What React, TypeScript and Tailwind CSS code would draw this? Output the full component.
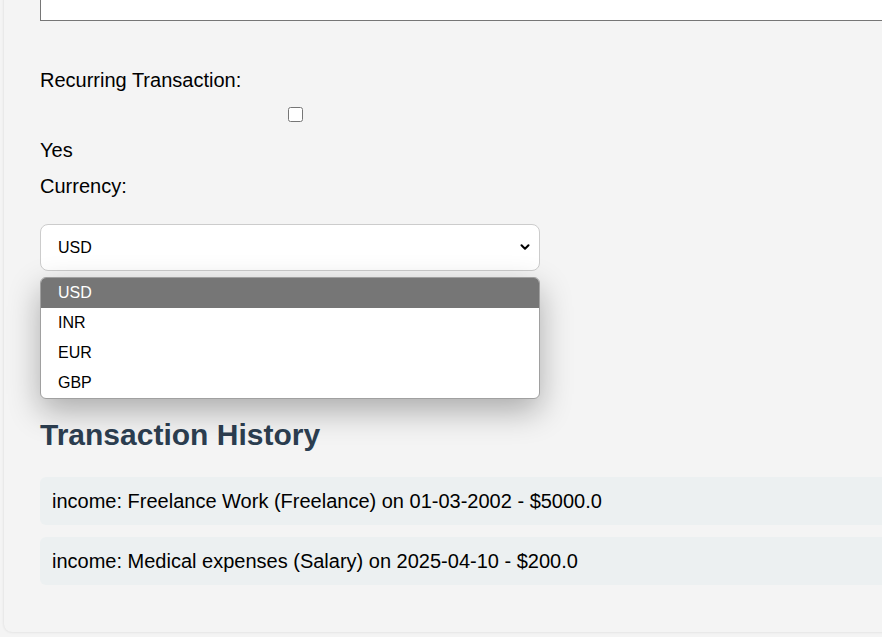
import { ChevronDown } from "lucide-react";

const currencies = ["USD", "INR", "EUR", "GBP"];

const transactions = [
  "income: Freelance Work (Freelance) on 01-03-2002 - $5000.0",
  "income: Medical expenses (Salary) on 2025-04-10 - $200.0",
];

export default function App() {
  return (
    <div className="h-[637px] w-[882px] overflow-hidden bg-[#f4f4f4] font-['Liberation_Sans',Arial,sans-serif] text-black">
      {/* form card (page is scrolled, top is off screen) */}
      <div className="-mt-[60px] ml-[4px] w-[1000px] rounded-lg bg-[#f4f4f4] px-9 pt-9 pb-[47px] shadow-[0_0_3px_rgba(0,0,0,0.12)]">
        <input
          type="text"
          className="block h-[45px] w-full border border-[#767676] bg-white"
        />

        <label className="mt-[48px] block text-[20px] leading-[23px]">Recurring Transaction:</label>
        <div className="mt-[15px] flex w-[510px] justify-center">
          <input type="checkbox" className="m-0 h-[15px] w-[15px]" />
        </div>
        <div className="mt-[17px] text-[20px] leading-[23px]">Yes</div>
        <label className="mt-[13px] block text-[20px] leading-[23px]">Currency:</label>

        <div className="relative mt-[26px] w-[500px]">
          <select className="block h-[47px] w-full appearance-none rounded-lg border border-[#cccccc] bg-white pl-[17px] text-[16px] text-black outline-none">
            {currencies.map((c) => (
              <option key={c}>{c}</option>
            ))}
          </select>
          <ChevronDown className="pointer-events-none absolute right-[8px] top-[16px] h-[14px] w-[14px] text-black" strokeWidth={3.5} />

          {/* open native dropdown list */}
          <div className="absolute left-0 top-[53px] z-10 w-full overflow-hidden rounded-md border border-[#a0a0a0] bg-white shadow-[0_12px_32px_rgba(0,0,0,0.3)]">
            {currencies.map((c, i) => (
              <div
                key={c}
                className={
                  i === 0
                    ? "h-[30px] bg-[#767676] pl-[17px] text-[16px] leading-[30px] text-white"
                    : "h-[30px] pl-[17px] text-[16px] leading-[30px] text-black"
                }
              >
                {c}
              </div>
            ))}
          </div>
        </div>

        <button className="mt-[67px] block h-[34px] w-[500px] rounded bg-[#3a7fc0] text-[16px] text-white">
          Add Transaction
        </button>

        <h2 className="mt-[46px] text-[30px] font-bold leading-[34px] text-[#2c3e50]">Transaction History</h2>

        <ul className="mt-[25px] flex flex-col gap-[12px]">
          {transactions.map((t) => (
            <li key={t} className="h-[48px] rounded-md bg-[#ecf0f1] pl-[12px] text-[20px] leading-[48px]">
              {t}
            </li>
          ))}
        </ul>
      </div>
    </div>
  );
}
